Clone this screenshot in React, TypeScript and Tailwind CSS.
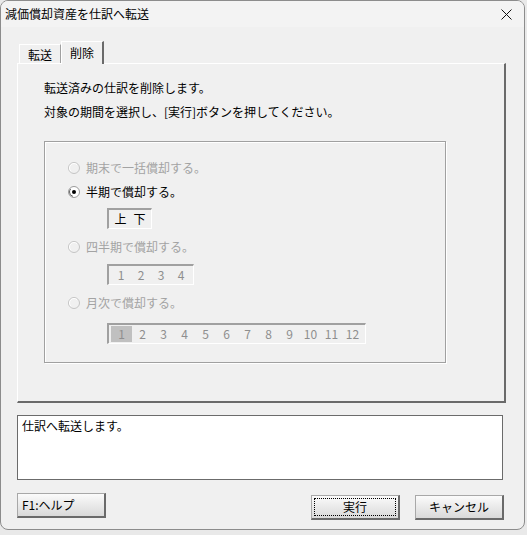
import React from "react";

const font = "font-['Noto_Sans_CJK_JP','Noto_Sans',sans-serif]";

const Radio: React.FC<{ checked?: boolean; disabled?: boolean }> = ({ checked, disabled }) => (
  <svg width="12" height="12" viewBox="0 0 12 12" className="shrink-0">
    {disabled ? (
      <>
        <circle cx="6" cy="6" r="5.5" fill="#f0f0f0" stroke="#c4c4c4" />
        <circle cx="6" cy="6" r="4.5" fill="none" stroke="#ffffff" strokeDasharray="14 14" strokeDashoffset="-10" />
      </>
    ) : (
      <>
        <circle cx="6" cy="6" r="5.5" fill="#ffffff" stroke="#9a9a9a" />
        <circle cx="6" cy="6" r="4.5" fill="none" stroke="#5f5f5f" strokeDasharray="9 30" strokeDashoffset="-8" />
        {checked && <circle cx="6" cy="6" r="2" fill="#000000" />}
      </>
    )}
  </svg>
);

const RadioRow: React.FC<{ label: string; checked?: boolean; disabled?: boolean; className?: string }> = ({
  label,
  checked,
  disabled,
  className,
}) => (
  <div className={`flex items-center h-[20px] pl-[23px] gap-[6px] ${className ?? ""}`}>
    <Radio checked={checked} disabled={disabled} />
    <span className={`text-[12px] leading-none ${disabled ? "text-[#a3a3a3]" : "text-black"}`}>{label}</span>
  </div>
);

const PeriodBox: React.FC<{
  items: string[];
  cellWidth: string;
  disabled?: boolean;
  selected?: number;
  className?: string;
}> = ({ items, cellWidth, disabled, selected, className }) => (
  <div
    className={`ml-[62px] w-max flex items-center h-[21px] px-[2px] border-t-2 border-l-2 border-b border-r border-t-[#a0a0a0] border-l-[#a0a0a0] border-b-white border-r-white ${className ?? ""}`}
  >
    {items.map((it, i) => (
      <div
        key={it}
        className={`${cellWidth} h-[16px] flex items-center justify-center text-[12px] leading-none ${
          selected === i ? "bg-[#c0c0c0]" : ""
        } ${disabled ? "text-[#8e8e8e]" : "text-black"}`}
      >
        {it}
      </div>
    ))}
  </div>
);

const WinButton: React.FC<{ label: string; focused?: boolean; left?: boolean; className?: string }> = ({
  label,
  focused,
  left,
  className,
}) => (
  <div
    className={`relative w-[89px] h-[25px] flex items-center border border-[#a8a8a8] border-r-2 border-b-2 border-r-[#6a6a6a] border-b-[#6a6a6a] bg-gradient-to-b from-[#fbfbfb] to-[#d9d9d9] text-[12px] leading-none text-black ${
      left ? "justify-start pl-[4px]" : "justify-center"
    } ${className ?? ""}`}
  >
    {focused && <div className="absolute inset-[2px] border border-dotted border-black" />}
    <span>{label}</span>
  </div>
);

export default function App() {
  return (
    <div className={`w-[527px] h-[535px] bg-[#e9e9e9] ${font}`}>
      <div className="w-[525px] h-[530px] bg-[#f0f0f0] border border-[#8c8c8c] rounded-[8px] overflow-hidden flex flex-col">
        {/* title bar */}
        <div className="h-[26px] bg-[#f3f3f3] flex items-center justify-between pl-[4px] pr-[12px]">
          <span className="text-[12px] leading-none text-black">減価償却資産を仕訳へ転送</span>
          <svg width="11" height="11" viewBox="0 0 11 11">
            <path d="M0.5 0.5 L10.5 10.5 M10.5 0.5 L0.5 10.5" stroke="#111" strokeWidth="1" />
          </svg>
        </div>

        {/* tabs */}
        <div className="mt-[14px] pl-[18px] flex items-end h-[22px]">
          <div className="w-[42px] h-[19px] border-t border-l border-white border-r border-r-[#a0a0a0] flex items-center justify-center text-[12px] leading-none text-black pt-[2px]">
            転送
          </div>
          <div className="w-[43px] h-[23px] -mb-[1px] relative z-10 bg-[#f0f0f0] border-t border-l border-white border-r-2 border-r-[#6a6a6a] flex items-start justify-center pt-[5px] text-[12px] leading-none text-black">
            削除
          </div>
        </div>

        {/* panel */}
        <div className="ml-[16px] w-[489px] h-[340px] border-t border-l border-white border-r-2 border-b-2 border-r-[#6a6a6a] border-b-[#6a6a6a] pl-[26px] pt-[17px]">
          <p className="text-[12px] leading-[14px] text-black">転送済みの仕訳を削除します。</p>
          <p className="mt-[10px] text-[12px] leading-[14px] text-black">対象の期間を選択し、[実行]ボタンを押してください。</p>

          <div className="mt-[22px] w-[402px] h-[222px] border border-[#a0a0a0] shadow-[inset_1px_1px_0_#ffffff,1px_1px_0_#ffffff] pt-[16px]">
            <RadioRow label="期末で一括償却する。" disabled />
            <RadioRow label="半期で償却する。" checked className="mt-[4px]" />
            <PeriodBox items={["上", "下"]} cellWidth="w-[19px]" className="mt-[6px]" />
            <RadioRow label="四半期で償却する。" disabled className="mt-[8px]" />
            <PeriodBox items={["1", "2", "3", "4"]} cellWidth="w-[20px]" disabled className="mt-[7px]" />
            <RadioRow label="月次で償却する。" disabled className="mt-[8px]" />
            <PeriodBox
              items={["1", "2", "3", "4", "5", "6", "7", "8", "9", "10", "11", "12"]}
              cellWidth="w-[21px]"
              disabled
              selected={0}
              className="mt-[10px]"
            />
          </div>
        </div>

        {/* message */}
        <div className="mt-[12px] ml-[16px] w-[486px] h-[65px] bg-white border border-[#6b6b6b] px-[4px] pt-[3px] text-[12px] leading-[14px] text-black">
          仕訳へ転送します。
        </div>

        {/* buttons */}
        <div className="mt-[13px] ml-[16px] w-[487px] flex items-start">
          <WinButton label="F1:ヘルプ" left />
          <div className="ml-auto flex gap-[15px] mt-[2px]">
            <WinButton label="実行" focused />
            <WinButton label="キャンセル" />
          </div>
        </div>
      </div>
    </div>
  );
}
